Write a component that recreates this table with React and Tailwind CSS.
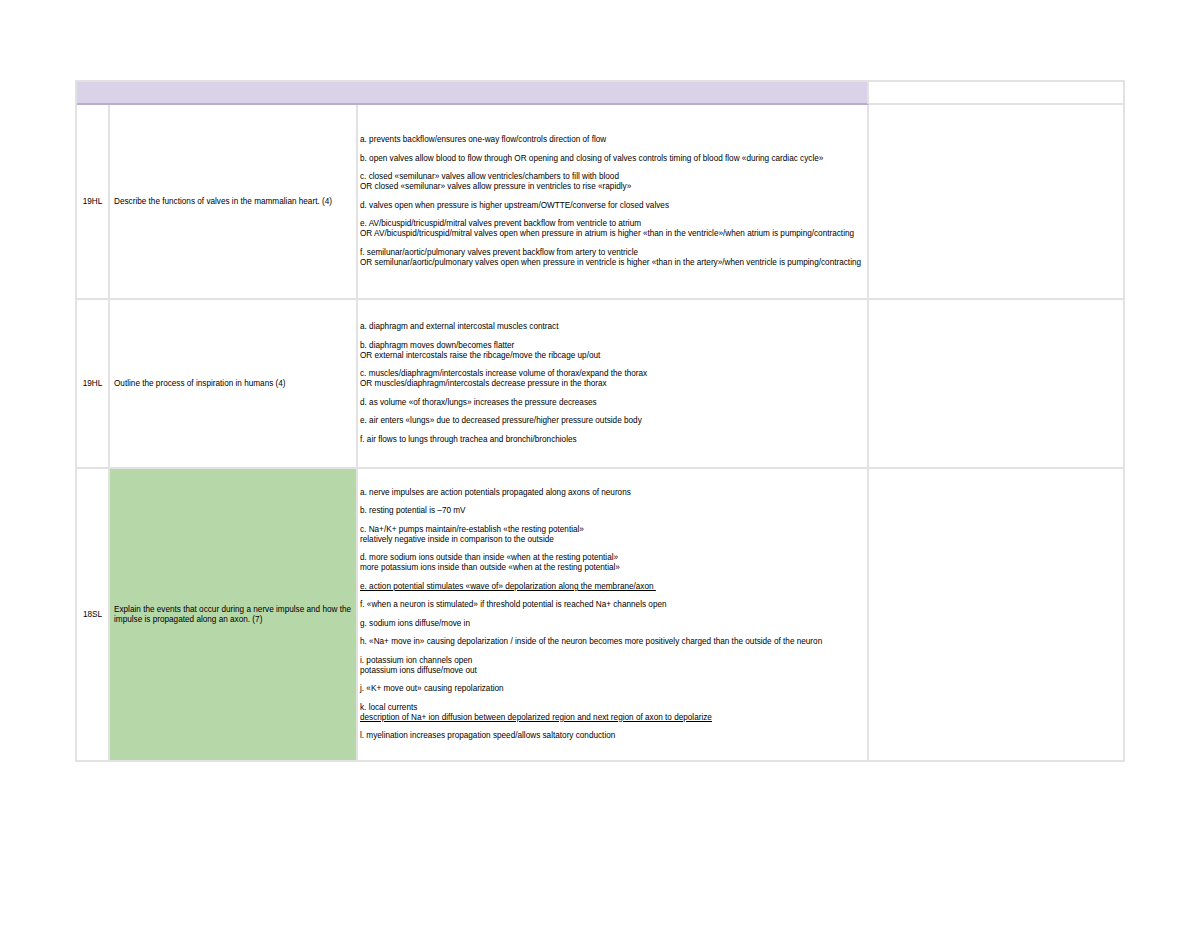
import React from 'react';

const rows = [
  {
    code: '19HL',
    question: 'Describe the functions of valves in the mammalian heart. (4)',
    height: 'h-[195px]',
    green: false,
    points: [
      ['a. prevents backflow/ensures one-way flow/controls direction of flow'],
      ['b. open valves allow blood to flow through OR opening and closing of valves controls timing of blood flow «during cardiac cycle»'],
      ['c. closed «semilunar» valves allow ventricles/chambers to fill with blood', 'OR closed «semilunar» valves allow pressure in ventricles to rise «rapidly»'],
      ['d. valves open when pressure is higher upstream/OWTTE/converse for closed valves'],
      ['e. AV/bicuspid/tricuspid/mitral valves prevent backflow from ventricle to atrium', 'OR AV/bicuspid/tricuspid/mitral valves open when pressure in atrium is higher «than in the ventricle»/when atrium is pumping/contracting'],
      ['f. semilunar/aortic/pulmonary valves prevent backflow from artery to ventricle', 'OR semilunar/aortic/pulmonary valves open when pressure in ventricle is higher «than in the artery»/when ventricle is pumping/contracting'],
    ],
  },
  {
    code: '19HL',
    question: 'Outline the process of inspiration in humans (4)',
    height: 'h-[169px]',
    green: false,
    points: [
      ['a. diaphragm and external intercostal muscles contract'],
      ['b. diaphragm moves down/becomes flatter', 'OR external intercostals raise the ribcage/move the ribcage up/out'],
      ['c. muscles/diaphragm/intercostals increase volume of thorax/expand the thorax', 'OR muscles/diaphragm/intercostals decrease pressure in the thorax'],
      ['d. as volume «of thorax/lungs» increases the pressure decreases'],
      ['e. air enters «lungs» due to decreased pressure/higher pressure outside body'],
      ['f. air flows to lungs through trachea and bronchi/bronchioles'],
    ],
  },
  {
    code: '18SL',
    question: 'Explain the events that occur during a nerve impulse and how the impulse is propagated along an axon. (7)',
    height: 'h-[293px]',
    green: true,
    points: [
      ['a. nerve impulses are action potentials propagated along axons of neurons'],
      ['b. resting potential is –70 mV'],
      ['c. Na+/K+ pumps maintain/re-establish «the resting potential»', 'relatively negative inside in comparison to the outside'],
      ['d. more sodium ions outside than inside «when at the resting potential»', 'more potassium ions inside than outside «when at the resting potential»'],
      [{ u: 'e. action potential stimulates «wave of» depolarization along the membrane/axon ' }],
      ['f. «when a neuron is stimulated» if threshold potential is reached Na+ channels open'],
      ['g. sodium ions diffuse/move in'],
      ['h. «Na+ move in» causing depolarization / inside of the neuron becomes more positively charged than the outside of the neuron'],
      ['i. potassium ion channels open', 'potassium ions diffuse/move out'],
      ['j. «K+ move out» causing repolarization'],
      ['k. local currents', { u: 'description of Na+ ion diffusion between depolarized region and next region of axon to depolarize' }],
      ['l. myelination increases propagation speed/allows saltatory conduction'],
    ],
  },
];

const Line = ({ line }) =>
  typeof line === 'string' ? (
    <div className="whitespace-pre">{line}</div>
  ) : (
    <div className="whitespace-pre"><span className="underline">{line.u}</span></div>
  );

const App = () => {
  return (
    <div className="min-h-[927px] bg-white pt-[80px] pl-[75px] font-['Liberation_Sans',Arial,sans-serif] text-[8.2px] leading-[10px] text-black">
      <div className="w-[1050px] border-l-2 border-t-2 border-[#e2e2e2]">
        {/* header */}
        <div className="flex h-[23px]">
          <div className="w-[792px] border-b-2 border-r-2 border-b-[#b8aecf] border-r-[#e2e2e2] bg-[#d9d2e9]" />
          <div className="w-[256px] border-b-2 border-r-2 border-[#e2e2e2]" />
        </div>

        {rows.map((row, i) => (
          <div key={i} className={`flex ${row.height}`}>
            <div className="flex w-[33px] items-center justify-center border-b-2 border-r-2 border-[#e2e2e2]">
              {row.code}
            </div>
            <div className={`flex w-[248px] items-center border-b-2 border-r-2 border-[#e2e2e2] pl-[4px] pr-[1px] ${row.green ? 'bg-[#b6d7a8]' : ''}`}>
              {row.question}
            </div>
            <div className="flex w-[511px] flex-col justify-center gap-[8.5px] border-b-2 border-r-2 border-[#e2e2e2] pl-[2px]">
              {row.points.map((p, j) => (
                <div key={j}>
                  {p.map((line, k) => (
                    <Line key={k} line={line} />
                  ))}
                </div>
              ))}
            </div>
            <div className="w-[256px] border-b-2 border-r-2 border-[#e2e2e2]" />
          </div>
        ))}
      </div>
    </div>
  );
};

export default App;
